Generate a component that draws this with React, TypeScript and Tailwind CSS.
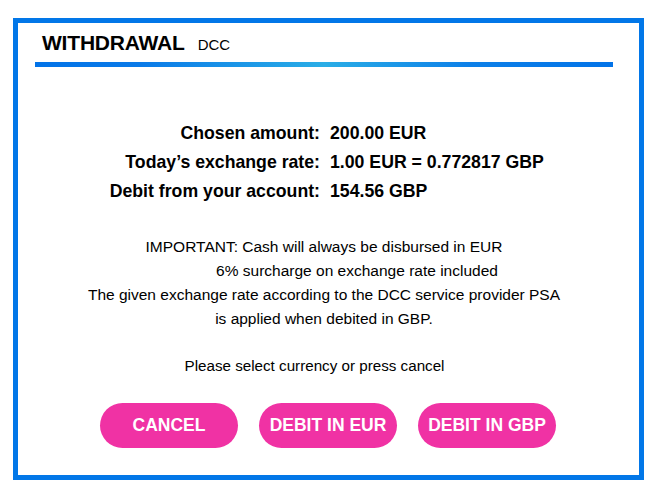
const rows = [
  { label: "Chosen amount:", value: "200.00 EUR" },
  { label: "Today’s exchange rate:", value: "1.00 EUR = 0.772817 GBP" },
  { label: "Debit from your account:", value: "154.56 GBP" },
];

const buttons = ["CANCEL", "DEBIT IN EUR", "DEBIT IN GBP"];

export default function App() {
  return (
    <div className="w-[660px] h-[500px] bg-white pt-[18px] pl-[13px] font-['Liberation_Sans',Arial,sans-serif] text-black">
      <div className="w-[631px] h-[462px] border-[5px] border-[#0277e8] flex flex-col">
        {/* header */}
        <div className="flex items-baseline gap-[13px] pl-[24px] pt-[9px] h-[39px]">
          <span className="text-[21px] font-bold leading-none tracking-[-0.2px]">WITHDRAWAL</span>
          <span className="text-[15px] leading-none">DCC</span>
        </div>
        <div className="ml-[17px] mr-[26px] h-[5px] bg-[linear-gradient(to_right,#0273e8_0%,#0a7ae8_18%,#2aade6_50%,#0d80e8_75%,#0273e8_100%)]" />

        {/* amounts */}
        <div className="mt-[52px] grid grid-cols-[302px_1fr] gap-x-[10px] text-[17.7px] font-bold leading-[29px]">
          {rows.map((r) => (
            <div key={r.label} className="contents">
              <div className="text-right">{r.label}</div>
              <div>{r.value}</div>
            </div>
          ))}
        </div>

        {/* notice */}
        <div className="mt-[29px] flex flex-col items-center text-[15.5px] leading-[24px] pr-[9px]">
          <p>IMPORTANT: Cash will always be disbursed in EUR</p>
          <p className="pl-[66px]">6% surcharge on exchange rate included</p>
          <p>The given exchange rate according to the DCC service provider PSA</p>
          <p>is applied when debited in GBP.</p>
        </div>

        <p className="mt-[23px] text-center text-[15.2px] leading-[24px] pr-[28px]">
          Please select currency or press cancel
        </p>

        <div className="mt-[25px] flex justify-center gap-[21px] pr-[1px]">
          {buttons.map((b) => (
            <button
              key={b}
              className="w-[138px] h-[45px] rounded-full bg-[#f032a4] text-white text-[17.5px] font-bold"
            >
              {b}
            </button>
          ))}
        </div>
      </div>
    </div>
  );
}
